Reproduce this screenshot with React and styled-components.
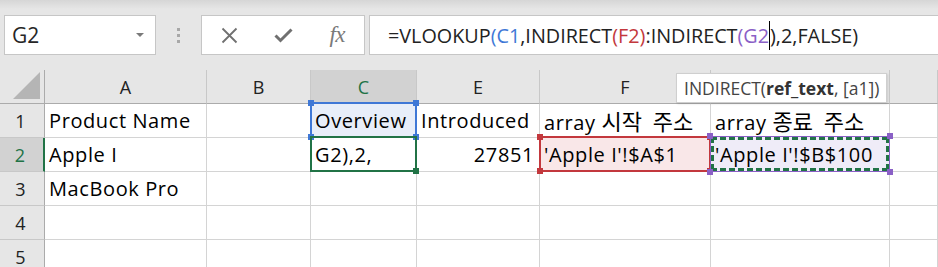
import React from "react";
import styled, { createGlobalStyle } from "styled-components";

const GlobalStyle = createGlobalStyle`
  html, body { margin: 0; padding: 0; background: #fff; }
  body { width: 938px; height: 267px; overflow: hidden; font-family: "Open Sans", "Noto Sans CJK KR", sans-serif; }
`;

const COLS = [45, 162, 104, 106, 123, 171, 179, 48];

const Window = styled.div`
  width: 938px;
  height: 267px;
  overflow: hidden;
  background: #fff;
`;

const TopBar = styled.div`
  display: flex;
  align-items: stretch;
  height: 40px;
  padding: 15px 0 15px 4px;
  background: linear-gradient(#d6d6d6, #e6e6e6 9px);
`;

const Box = styled.div`
  display: flex;
  align-items: center;
  box-sizing: border-box;
  background: #fff;
  border: 1px solid #c6c6c6;
  border-right: ${(p) => (p.$open ? "none" : "1px solid #c6c6c6")};
`;

const NameBox = styled(Box)`
  width: 152px;
  justify-content: space-between;
  padding: 0 11px 0 7px;
  font-family: "Open Sans", sans-serif;
  font-size: 21px;
  color: #262626;
`;

const Arrow = styled.span`
  width: 0;
  height: 0;
  border-left: 4px solid transparent;
  border-right: 4px solid transparent;
  border-top: 4px solid #7a7a7a;
`;

const Grip = styled.div`
  width: 45px;
  display: flex;
  flex-direction: column;
  align-items: center;
  justify-content: center;
  gap: 3px;
  span {
    width: 3px;
    height: 3px;
    background: #a8a8a8;
  }
`;

const Buttons = styled(Box)`
  width: 164px;
  padding-left: 1px;
`;

const Btn = styled.div`
  width: 54px;
  display: flex;
  justify-content: center;
  align-items: center;
`;

const Fx = styled.span`
  font-family: "Liberation Serif", serif;
  font-style: italic;
  font-size: 23px;
  color: #7a7a7a;
  letter-spacing: -0.5px;
`;

const Formula = styled(Box)`
  flex: 1;
  margin-left: 4px;
  padding-left: 18px;
  font-family: "Open Sans", sans-serif;
  font-size: 19.8px;
  color: #222;
  white-space: nowrap;
`;

const Ref = styled.span`
  color: ${(p) => p.$c};
`;

const Caret = styled.span`
  display: inline-block;
  width: 1px;
  height: 29px;
  background: #000;
  vertical-align: middle;
`;

const Sheet = styled.div`
  position: relative;
  display: grid;
  grid-template-columns: ${COLS.map((w) => w + "px").join(" ")};
  grid-template-rows: 34px repeat(5, 34px);
`;

const Corner = styled.div`
  box-sizing: border-box;
  background: #e6e6e6;
  border-right: 1px solid #ababab;
  border-bottom: 1px solid #ababab;
  display: flex;
  justify-content: flex-end;
  align-items: flex-end;
  padding: 0 4px 4px 0;
`;

const ColHead = styled.div`
  box-sizing: border-box;
  display: flex;
  justify-content: center;
  align-items: center;
  background: ${(p) => (p.$sel ? "#d2d2d2" : "#e6e6e6")};
  color: ${(p) => (p.$sel ? "#217346" : "#222")};
  border-right: 1px solid #c8c8c8;
  border-bottom: 1px solid ${(p) => (p.$sel ? "#217346" : "#ababab")};
  font-family: "Open Sans", sans-serif;
  font-size: 18px;
`;

const RowHead = styled.div`
  box-sizing: border-box;
  display: flex;
  justify-content: center;
  align-items: center;
  padding-right: 3px;
  background: ${(p) => (p.$sel ? "#d2d2d2" : "#e6e6e6")};
  color: ${(p) => (p.$sel ? "#217346" : "#222")};
  border-right: ${(p) => (p.$sel ? "2px solid #217346" : "1px solid #ababab")};
  border-bottom: 1px solid #c8c8c8;
  font-family: "Open Sans", sans-serif;
  font-size: 18px;
`;

const Cell = styled.div`
  position: relative;
  box-sizing: border-box;
  display: flex;
  align-items: center;
  justify-content: ${(p) => (p.$num ? "flex-end" : "flex-start")};
  padding: 0 5px 1px 4px;
  border-right: 1px solid #d4d4d4;
  border-bottom: 1px solid #d4d4d4;
  font-family: "Open Sans", "Noto Sans CJK KR", sans-serif;
  font-size: 20px;
  letter-spacing: 0.6px;
  color: #000;
  white-space: nowrap;
  z-index: ${(p) => (p.$over ? 1 : 0)};
`;

const Text = styled.span`
  position: relative;
  z-index: 2;
`;

const Ko = styled.span`
  font-family: "Noto Sans CJK KR", sans-serif;
  font-size: 22px;
  letter-spacing: 0;
  word-spacing: 6px;
`;

const Highlight = styled.div`
  position: absolute;
  top: -2px;
  left: -1px;
  right: -1px;
  bottom: -1px;
  background: ${(p) => p.$fill || "transparent"};
  border: ${(p) => p.$w || 2}px solid ${(p) => p.$color};
  z-index: 1;
`;

const dash = (dir) =>
  `repeating-linear-gradient(${dir}, #217346 0 6px, transparent 6px 9px)`;

const Marquee = styled.div`
  position: absolute;
  inset: 0;
  background:
    ${dash("90deg")} top left / 100% 3px no-repeat,
    ${dash("90deg")} bottom left / 100% 3px no-repeat,
    ${dash("180deg")} top left / 3px 100% no-repeat,
    ${dash("180deg")} top right / 3px 100% no-repeat;
`;

const Handle = styled.span`
  position: absolute;
  width: 6px;
  height: 6px;
  background: ${(p) => p.$color};
  ${(p) => (p.$top ? "top: -4px;" : "bottom: -4px;")}
  ${(p) => (p.$left ? "left: -4px;" : "right: -4px;")}
`;

const Tip = styled.div`
  position: absolute;
  left: 676px;
  top: 3px;
  width: 211px;
  height: 30px;
  box-sizing: border-box;
  display: flex;
  align-items: center;
  padding-left: 7px;
  background: #fff;
  border: 1px solid #cfcfcf;
  box-shadow: 1px 1px 2px rgba(0, 0, 0, 0.12);
  font-family: "Open Sans", sans-serif;
  font-size: 17.5px;
  color: #444;
  white-space: nowrap;
  z-index: 5;
  b {
    color: #333;
  }
`;

const corners = (color) => (
  <>
    <Handle $color={color} $top $left />
    <Handle $color={color} $top />
    <Handle $color={color} $left />
    <Handle $color={color} />
  </>
);

const Triangle = () => (
  <svg width="27" height="27" viewBox="0 0 27 27">
    <polygon points="27,0 27,27 0,27" fill="#b5b5b5" />
  </svg>
);

const rows = [
  ["Product Name", "", "Overview", "Introduced", ["array ", <Ko key="k">시작 주소</Ko>], ["array ", <Ko key="k">종료 주소</Ko>]],
  ["Apple I", "", "G2),2,", "27851", "'Apple I'!$A$1", "'Apple I'!$B$100"],
  ["MacBook Pro", "", "", "", "", ""],
  ["", "", "", "", "", ""],
  ["", "", "", "", "", ""],
];

const renderOverlay = (r, c) => {
  if (r === 0 && c === 2)
    return (
      <Highlight $color="#3f78d6" $fill="#e8eef9">
        {corners("#3f78d6")}
      </Highlight>
    );
  if (r === 1 && c === 2)
    return (
      <Highlight $color="#217346">
        <Handle $color="#217346" />
      </Highlight>
    );
  if (r === 1 && c === 4)
    return (
      <Highlight $color="#c3383d" $fill="#f9e7e8">
        {corners("#c3383d")}
      </Highlight>
    );
  if (r === 1 && c === 5)
    return (
      <Highlight $color="#8a60c6" $fill="#efecf8" $w={1}>
        <Marquee />
        {corners("#8a60c6")}
      </Highlight>
    );
  return null;
};

export default function App() {
  return (
    <Window>
      <GlobalStyle />
      <TopBar>
        <NameBox>
          G2
          <Arrow />
        </NameBox>
        <Grip>
          <span />
          <span />
          <span />
        </Grip>
        <Buttons>
          <Btn>
            <svg width="17" height="17" viewBox="0 0 17 17">
              <path d="M1.5 1.5 L15.5 15.5 M15.5 1.5 L1.5 15.5" stroke="#707070" strokeWidth="1.8" fill="none" />
            </svg>
          </Btn>
          <Btn>
            <svg width="19" height="15" viewBox="0 0 19 15">
              <path d="M1.5 7.5 L6.5 12.5 L17.5 1.5" stroke="#707070" strokeWidth="3" fill="none" />
            </svg>
          </Btn>
          <Btn>
            <Fx>fx</Fx>
          </Btn>
        </Buttons>
        <Formula $open>
          =VLOOKUP<Ref $c="#3f78d6">(C1</Ref>,INDIRECT<Ref $c="#c3383d">(F2)</Ref>:INDIRECT
          <Ref $c="#8a60c6">(G2</Ref>
          <Caret />
          ),2,FALSE)
        </Formula>
      </TopBar>
      <Sheet>
        <Corner>
          <Triangle />
        </Corner>
        {["A", "B", "C", "E", "F", "G", ""].map((h, i) => (
          <ColHead key={i} $sel={h === "C"}>
            {h}
          </ColHead>
        ))}
        {rows.map((row, r) => (
          <React.Fragment key={r}>
            <RowHead $sel={r === 1}>{r + 1}</RowHead>
            {row.map((v, c) => {
              const overlay = renderOverlay(r, c);
              return (
                <Cell key={c} $num={/^\d+$/.test(v)} $over={!!overlay}>
                  {overlay}
                  <Text>{v}</Text>
                </Cell>
              );
            })}
            <Cell />
          </React.Fragment>
        ))}
        <Tip>
          INDIRECT(<b>ref_text</b>, [a1])
        </Tip>
      </Sheet>
    </Window>
  );
}
